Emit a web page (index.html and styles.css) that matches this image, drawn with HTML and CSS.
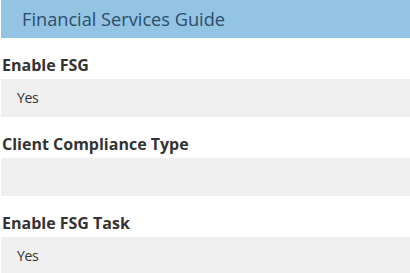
FILE: index.html
```html
<!DOCTYPE html>
<html lang="en">
<head>
  <meta charset="UTF-8" />
  <title>Financial Services Guide</title>
  <link rel="stylesheet" href="styles.css">
</head>
<body>

  <div class="panel">
    <h2 class="panel-title">Financial Services Guide</h2>

    <div class="field">
      <div class="field-label">Enable FSG</div>
      <div class="field-value">Yes</div>
    </div>

    <div class="field">
      <div class="field-label">Client Compliance Type</div>
      <div class="field-value"></div>
    </div>

    <div class="field">
      <div class="field-label">Enable FSG Task</div>
      <div class="field-value">Yes</div>
    </div>
  </div>

</body>
</html>
```

FILE: styles.css
```css
body {
  margin: 0 0 0 1px;
  font-family: "Open Sans", sans-serif;
  background: #fff;
  overflow: hidden;
}

.panel {
  width: 420px;
}

.panel-title {
  margin: 0;
  height: 38px;
  line-height: 38px;
  padding-left: 21px;
  background: #94c4e4;
  color: #2d4c6a;
  font-size: 18.2px;
  font-weight: normal;
}

.field {
  margin-top: 16px;
}

.field-label {
  margin-bottom: 3px;
  padding-left: 1px;
  line-height: 22px;
  font-size: 16px;
  font-weight: bold;
  color: #333;
}

.field-value {
  height: 38px;
  line-height: 38px;
  padding-left: 16px;
  background: #efefef;
  font-size: 14px;
  letter-spacing: -0.3px;
  color: #333;
}
```
